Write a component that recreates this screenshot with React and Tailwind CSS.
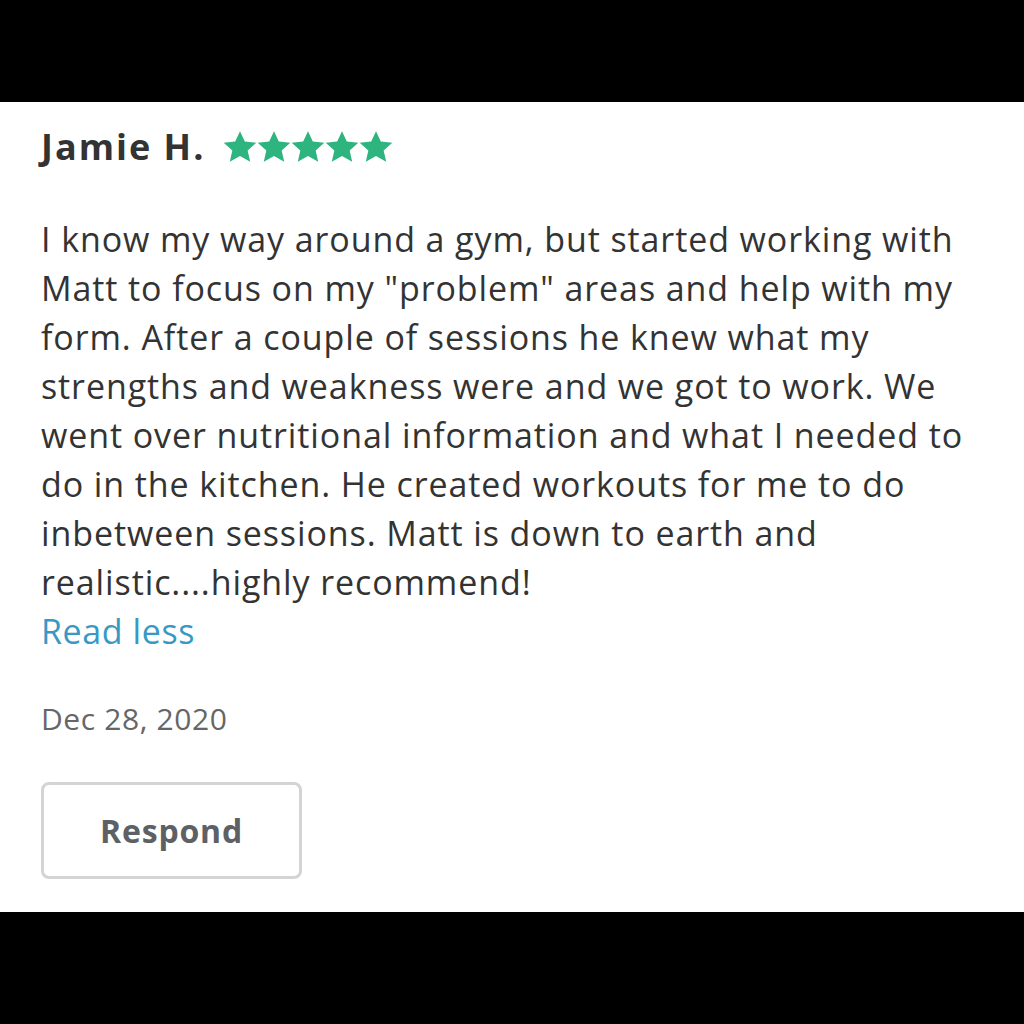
import React from 'react';

const lines = [
  'I know my way around a gym, but started working with',
  'Matt to focus on my "problem" areas and help with my',
  'form. After a couple of sessions he knew what my',
  'strengths and weakness were and we got to work. We',
  'went over nutritional information and what I needed to',
  'do in the kitchen. He created workouts for me to do',
  'inbetween sessions. Matt is down to earth and',
  'realistic....highly recommend!',
];

const Star = () => (
  <svg viewBox="0 0 24 24" className="w-[34px] h-[34px]" fill="#2db47f">
    <path d="M12 0.8l3.4 7.4 8.1.8-6.1 5.4 1.8 8L12 18.3 4.8 22.4l1.8-8L.5 9l8.1-.8z" />
  </svg>
);

const App = () => {
  return (
    <div className="w-[1024px] h-[1024px] bg-black flex flex-col" style={{ fontFamily: '"Open Sans", sans-serif' }}>
      <div className="h-[102px] shrink-0" />
      <div className="h-[810px] bg-white px-[41px] pt-[22px]">
        <div className="flex items-center gap-[18px]">
          <h1 className="text-[36px] font-bold tracking-[2px] text-[#333333] leading-[46px]">Jamie H.</h1>
          <div className="flex gap-0">
            {[0, 1, 2, 3, 4].map(i => <Star key={i} />)}
          </div>
        </div>
        <div className="mt-[45px] text-[34px] tracking-[0.9px] leading-[49px] text-[#333333]">
          {lines.map((l, i) => (
            <p key={i} className="whitespace-nowrap">{l}</p>
          ))}
        </div>
        <a className="block text-[34px] tracking-[0.6px] leading-[49px] text-[#3799c4]">Read less</a>
        <p className="mt-[45px] text-[30px] tracking-[0.6px] leading-[36px] text-[#666666]">Dec 28, 2020</p>
        <button className="mt-[45px] w-[261px] h-[97px] border-[3px] border-[#d4d4d4] rounded-[8px] text-[32px] tracking-[0.8px] font-bold text-[#5d6166]">
          Respond
        </button>
      </div>
    </div>
  );
};

export default App;
